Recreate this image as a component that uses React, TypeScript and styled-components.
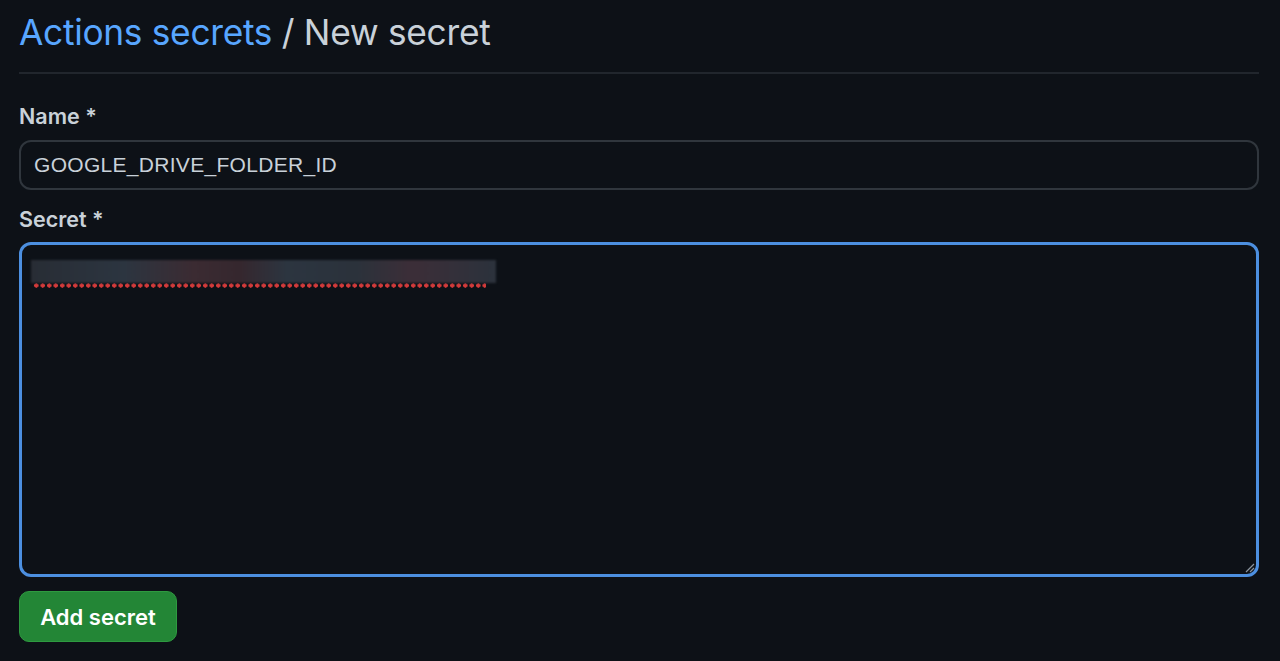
import React from "react";
import styled, { createGlobalStyle } from "styled-components";

const Global = createGlobalStyle`
  html, body { margin: 0; padding: 0; background: #0d1117; }
  body { font-family: Inter, "Liberation Sans", Arial, sans-serif; color: #c9d1d9; }
  * { box-sizing: border-box; }
`;

const Page = styled.div`
  width: 1280px;
  height: 661px;
  padding: 0 21px 0 19px;
  background: #0d1117;
  overflow: hidden;
`;

const Header = styled.div`
  padding-top: 11px;
  height: 74px;
  border-bottom: 2px solid #21262d;
`;

const Title = styled.h1`
  margin: 0;
  font-size: 35.3px;
  font-weight: 400;
  line-height: 44px;
  color: #c9d1d9;
  letter-spacing: -0.3px;
`;

const Crumb = styled.span`
  color: #58a6ff;
`;

const Form = styled.form`
  display: flex;
  flex-direction: column;
`;

const Label = styled.label<{ $top: number }>`
  display: block;
  margin-top: ${(p) => p.$top}px;
  font-size: 21.5px;
  font-weight: 600;
  line-height: 28px;
  color: #c9d1d9;
`;

const Input = styled.div`
  margin-top: 10px;
  height: 50px;
  border: 2px solid #30363d;
  border-radius: 12px;
  padding: 0 13px;
  display: flex;
  align-items: center;
  font-family: "Liberation Sans", Arial, sans-serif;
  font-size: 21px;
  color: #c9d1d9;
  letter-spacing: 0.3px;
`;

const TextArea = styled.div`
  position: relative;
  margin-top: 9px;
  height: 335px;
  border: 3px solid #4c8fe0;
  border-radius: 12px;
  padding: 15px 9px;
`;

const Blur = styled.div`
  width: 465px;
  height: 23px;
  filter: blur(1.2px);
  background: linear-gradient(
    90deg,
    #282d35 0%,
    #2c3540 20%,
    #3b2b32 35%,
    #35272e 45%,
    #2c3540 55%,
    #2b323b 70%,
    #3c2e38 82%,
    #2b323c 100%
  );
`;

const Squiggle = styled.div`
  margin-top: 0px;
  margin-left: 2px;
  width: 453px;
  height: 5px;
  background-image: radial-gradient(circle, #d43a3a 2px, transparent 2.3px);
  background-size: 6.5px 5px;
  background-repeat: repeat-x;
`;

const Grip = styled.svg`
  position: absolute;
  right: 1px;
  bottom: 1px;
`;

const Button = styled.button`
  margin-top: 14px;
  align-self: flex-start;
  width: 158px;
  height: 51px;
  border: 1px solid #2e9a40;
  border-radius: 10px;
  background: #238636;
  color: #ffffff;
  font-family: Inter, "Liberation Sans", Arial, sans-serif;
  font-size: 22px;
  font-weight: 600;
  cursor: pointer;
`;

export default function App() {
  return (
    <>
      <Global />
      <Page>
        <Header>
          <Title>
            <Crumb>Actions secrets</Crumb> / New secret
          </Title>
        </Header>
        <Form>
          <Label $top={28}>Name *</Label>
          <Input>GOOGLE_DRIVE_FOLDER_ID</Input>
          <Label $top={15}>Secret *</Label>
          <TextArea>
            <Blur />
            <Squiggle />
            <Grip width="12" height="12" viewBox="0 0 12 12">
              <path d="M11 3 L3 11 M11 7 L7 11" stroke="#8b949e" strokeWidth="1.2" />
            </Grip>
          </TextArea>
          <Button type="button">Add secret</Button>
        </Form>
      </Page>
    </>
  );
}
